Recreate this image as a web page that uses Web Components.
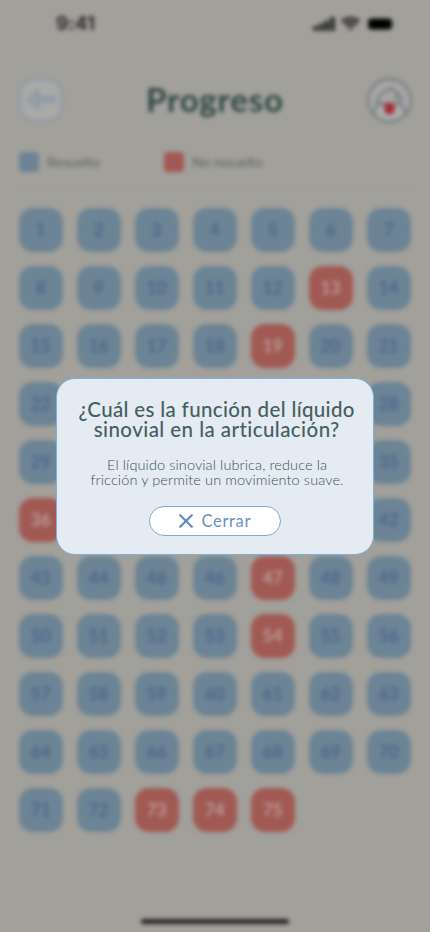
<!DOCTYPE html>
<html lang="es">
<head>
<meta charset="utf-8">
<title>Progreso</title>
<style>
html,body{margin:0;padding:0;background:#a2a09b}
body{width:430px;height:932px;overflow:hidden;font-family:Lato,"Open Sans",sans-serif}
</style>
</head>
<body>
<progress-app></progress-app>
<script>
/* Text whose tracking is adjusted so that it spans a given width */
class FitText extends HTMLElement{
  connectedCallback(){
    const r=this.attachShadow({mode:'open'});
    r.innerHTML='<style>:host{display:block;white-space:nowrap}span{display:inline-block}</style><span></span>';
    const s=r.querySelector('span');
    s.textContent=this.getAttribute('text');
    const w=+this.getAttribute('width'),n=s.textContent.length;
    const d=(w-s.getBoundingClientRect().width)/(n-1);
    s.style.letterSpacing=d+'px';
    s.style.marginRight=-d+'px';
  }
}
customElements.define('fit-text',FitText);

class StatusBar extends HTMLElement{
  constructor(){super();this.attachShadow({mode:'open'}).innerHTML=`
<style>
:host{display:flex;justify-content:space-between;align-items:center;box-sizing:border-box;height:48px;padding:0 36px 0 56px;color:#2c2c2a}
fit-text{font:700 19px/22px Inter,sans-serif;}
div{display:flex;align-items:center;gap:6px}
svg{display:block}
</style>
<fit-text text="9:41" width="39"></fit-text>
<div>
<svg width="22" height="14" viewBox="0 0 22 14" fill="#333331"><rect y="9" width="5" height="5" rx="1"/><rect x="5.6" y="6.5" width="5" height="7.5" rx="1"/><rect x="11.2" y="3.5" width="5" height="10.5" rx="1"/><rect x="17" y="0" width="5" height="14" rx="1"/></svg>
<svg width="19" height="14" viewBox="0 0 19 14" fill="none" stroke="#333331" stroke-width="3.6"><path d="M1 4.9a12.4 12.4 0 0 1 17 0"/><path d="M4.2 8.3a7.8 7.8 0 0 1 10.6 0"/><path d="M9.5 13.6 6.7 10.8a4 4 0 0 1 5.6 0z" fill="#333331" stroke="none"/></svg>
<svg width="28" height="14" viewBox="0 0 28 14"><rect x="2.2" y="1.5" width="23.6" height="11" rx="3" fill="#000"/><path d="M27 5v4" stroke="#777570" stroke-width="1.2"/></svg>
</div>`}
}
customElements.define('status-bar',StatusBar);

class PageHeader extends HTMLElement{
  constructor(){super();this.attachShadow({mode:'open'}).innerHTML=`
<style>
:host{display:flex;justify-content:space-between;align-items:center;box-sizing:border-box;height:48px;margin-top:28px;padding:0 17px 0 18px}
fit-text{font-weight:700;font-size:33px;line-height:40px;color:#2f4845;margin:-3px 0 0 -1px}
svg{display:block}
</style>
<svg width="46" height="46" viewBox="0 0 46 46"><rect x="2.5" y="2.5" width="41" height="41" rx="14" fill="#a9a9a8" stroke="#8997a8" stroke-width="1.8"/><path d="M11 22.5 19.5 14v6.5h15q2 0 2 2t-2 2h-15V31z" fill="#a3a5a7" stroke="#7f91a6" stroke-width="2" stroke-linejoin="round"/></svg>
<fit-text text="Progreso" width="137"></fit-text>
<svg width="47" height="47" viewBox="0 0 47 47"><circle cx="23.5" cy="23.5" r="21.5" fill="#a5a5a4" stroke="#6e7475" stroke-width="1.8"/><path d="M8 36c1-7 4-10 8-10l5 3M39 36c-1-7-4-10-8-10l-4 3M11 24c2-7 7-11 16-12M24 10l8 6-3 6M31 17l5 5-5 4M10 25l7 3" fill="none" stroke="#757b7c" stroke-width="2"/><path d="M13 38c-2-4-1-7 3-8h15c4 1 5 4 3 8q-10 6-21 0z" fill="#adadac"/><path d="M18.5 27q5-3 10 0v8q-5 5-10 0z" fill="#a22f34"/></svg>`}
}
customElements.define('page-header',PageHeader);

class LegendItem extends HTMLElement{
  connectedCallback(){this.attachShadow({mode:'open'}).innerHTML=`
<style>
:host{display:flex;align-items:center;gap:8px;font-size:14px;line-height:18px;color:#5f6461}
i{width:20px;height:20px;border-radius:4px;background:${this.getAttribute('color')}}
</style><i></i><fit-text text="${this.getAttribute('label')}" width="${this.getAttribute('width')}"></fit-text>`}
}
customElements.define('legend-item',LegendItem);

class NumberTile extends HTMLElement{
  connectedCallback(){this.attachShadow({mode:'open'}).innerHTML=`
<style>
:host{display:flex;align-items:center;justify-content:center;height:44px;border-radius:14px;background:#6c8495;color:#475f88;font-weight:500;font-size:17px;line-height:20px}
:host([failed]){background:#a15954;color:#c3adaa}
</style><span>${this.getAttribute('value')}</span>`}
}
customElements.define('number-tile',NumberTile);

class ProgressGrid extends HTMLElement{
  constructor(){super();
    const failed=[13,19,36,47,54,73,74,75];
    const labels={45:46};
    this.attachShadow({mode:'open'}).innerHTML=`
<style>:host{display:grid;grid-template-columns:repeat(7,44px);gap:14px;padding:17.5px 0 0 18.7px}</style>`+
    Array.from({length:75},(_,i)=>`<number-tile value="${labels[i+1]||i+1}"${failed.includes(i+1)?' failed':''}></number-tile>`).join('');
  }
}
customElements.define('progress-grid',ProgressGrid);

class AnswerDialog extends HTMLElement{
  constructor(){super();this.attachShadow({mode:'open'}).innerHTML=`
<style>
:host{display:flex;flex-direction:column;align-items:center;box-sizing:border-box;width:318px;height:177px;padding-top:20px;border:1.5px solid #7faed6;border-radius:19px;background:#e5ebf3;color:#455f5d}
.q{font-weight:500;font-size:20.5px;line-height:20px;margin-left:3px}
.a{font-weight:300;font-size:14.5px;line-height:15px;margin-left:4px;color:#38514f}
.q + .a{margin-top:18px}
button{display:flex;align-items:center;justify-content:center;gap:8px;box-sizing:border-box;width:132px;height:30px;margin:19px 0 0;padding:0;border:1px solid #7faacd;border-radius:15px;background:#fff;color:#6b91c2;font:400 16.5px/20px Lato,sans-serif}
svg{display:block}
</style>
<fit-text class="q" text="¿Cuál es la función del líquido" width="276"></fit-text>
<fit-text class="q" text="sinovial en la articulación?" width="246"></fit-text>
<fit-text class="a" text="El líquido sinovial lubrica, reduce la" width="220"></fit-text>
<fit-text class="a" text="fricción y permite un movimiento suave." width="253"></fit-text>
<button><svg width="14" height="14" viewBox="0 0 14 14"><path d="M1.2 1.2 12.8 12.8M12.8 1.2 1.2 12.8" stroke="#6189bd" stroke-width="2.1" stroke-linecap="round"/></svg><fit-text text="Cerrar" width="49"></fit-text></button>`}
}
customElements.define('answer-dialog',AnswerDialog);

class ProgressApp extends HTMLElement{
  constructor(){super();this.attachShadow({mode:'open'}).innerHTML=`
<style>
:host{display:block;position:relative;width:430px;height:932px;overflow:hidden;background:#a2a09b}
main{display:flex;flex-direction:column;height:932px;filter:blur(1.9px)}
.legend{display:flex;gap:64px;height:20px;margin:28px 0 0 19px}
hr{width:392px;height:1px;margin:17px 0 0 19px;border:0;background:#979893}
footer{display:flex;justify-content:center;margin-top:auto;padding-bottom:8px}
footer i{width:148px;height:5px;border-radius:3px;background:#242422}
answer-dialog{position:absolute;left:56px;top:378px}
</style>
<main>
<status-bar></status-bar>
<page-header></page-header>
<div class="legend"><legend-item color="#6c8495" label="Resuelto" width="53"></legend-item><legend-item color="#a15954" label="No resuelto" width="71"></legend-item></div>
<hr>
<progress-grid></progress-grid>
<footer><i></i></footer>
</main>
<answer-dialog></answer-dialog>`}
}
customElements.define('progress-app',ProgressApp);
</script>
</body>
</html>
